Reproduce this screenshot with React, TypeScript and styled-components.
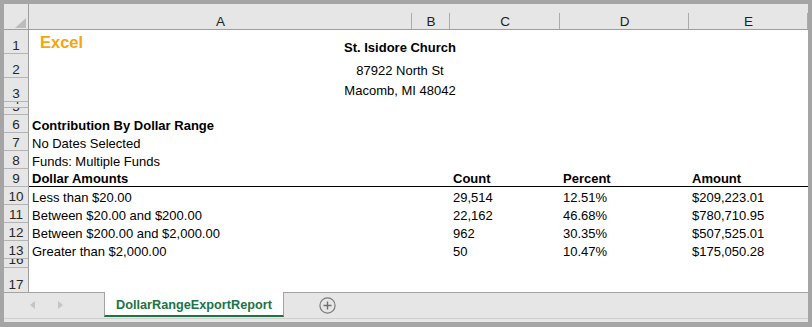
import styled, { createGlobalStyle } from "styled-components";

const GlobalStyle = createGlobalStyle`
  html, body {
    margin: 0;
    padding: 0;
    background: #a5a5a5;
    height: 327px;
    overflow: hidden;
  }
  body {
    font-family: "Liberation Sans", Arial, sans-serif;
  }
`;

const COLS = "25px 383px 38px 110px 129px 119px";
const LETTERS = ["A", "B", "C", "D", "E"];

const data = [
  { label: "Less than $20.00", count: "29,514", pct: "12.51%", amt: "$209,223.01" },
  { label: "Between $20.00 and $200.00", count: "22,162", pct: "46.68%", amt: "$780,710.95" },
  { label: "Between $200.00 and $2,000.00", count: "962", pct: "30.35%", amt: "$507,525.01" },
  { label: "Greater than $2,000.00", count: "50", pct: "10.47%", amt: "$175,050.28" },
];

const App = () => {
  return (
    <>
      <GlobalStyle />
      <Window>
        <Sheet>
          <HeaderRow>
            <Corner>
              <svg width="11" height="10" viewBox="0 0 11 10">
                <polygon points="11,0 11,10 0,10" fill="#bcbcbc" />
              </svg>
            </Corner>
            {LETTERS.map((l) => (
              <ColHeader key={l}>{l}</ColHeader>
            ))}
          </HeaderRow>

          <SheetRow $h={24}>
            <RowHead>1</RowHead>
            <Logo>Excel</Logo>
            <Cell $col="2 / -1" $center $bold $lh={12}>
              St. Isidore Church
            </Cell>
          </SheetRow>
          <SheetRow $h={24}>
            <RowHead>2</RowHead>
            <Cell $col="2 / -1" $center>
              87922 North St
            </Cell>
          </SheetRow>
          <SheetRow $h={24}>
            <RowHead>3</RowHead>
            <Cell $col="2 / -1" $center $pb={4}>
              Macomb, MI 48042
            </Cell>
          </SheetRow>
          <SheetRow $h={6}>
            <RowHead>4</RowHead>
          </SheetRow>
          <SheetRow $h={7}>
            <RowHead>5</RowHead>
          </SheetRow>
          <SheetRow $h={18}>
            <RowHead>6</RowHead>
            <Cell $col="2 / 4" $bold>
              Contribution By Dollar Range
            </Cell>
          </SheetRow>
          <SheetRow $h={18}>
            <RowHead>7</RowHead>
            <Cell $col="2 / 4">No Dates Selected</Cell>
          </SheetRow>
          <SheetRow $h={18}>
            <RowHead>8</RowHead>
            <Cell $col="2 / 4">Funds: Multiple Funds</Cell>
          </SheetRow>
          <SheetRow $h={18}>
            <RowHead>9</RowHead>
            <Cell $col="2 / 4" $bold $rule>
              Dollar Amounts
            </Cell>
            <Cell $col="4" $bold $rule>
              Count
            </Cell>
            <Cell $col="5" $bold $rule>
              Percent
            </Cell>
            <Cell $col="6" $bold $rule>
              Amount
            </Cell>
          </SheetRow>
          {data.map((d, i) => (
            <SheetRow $h={18} key={d.label}>
              <RowHead>{10 + i}</RowHead>
              <Cell $col="2 / 4">{d.label}</Cell>
              <Cell $col="4">{d.count}</Cell>
              <Cell $col="5">{d.pct}</Cell>
              <Cell $col="6">{d.amt}</Cell>
            </SheetRow>
          ))}
          <SheetRow $h={9}>
            <RowHead>16</RowHead>
          </SheetRow>
          <SheetRow $h={24}>
            <RowHead $last>17</RowHead>
          </SheetRow>
        </Sheet>

        <TabBar>
          <TabNav>
            <svg width="5" height="8" viewBox="0 0 5 8">
              <polygon points="5,0 5,8 0,4" fill="#c4c4c4" />
            </svg>
            <svg width="5" height="8" viewBox="0 0 5 8">
              <polygon points="0,0 0,8 5,4" fill="#c4c4c4" />
            </svg>
          </TabNav>
          <Tab>DollarRangeExportReport</Tab>
          <AddSheet>
            <svg width="17" height="17" viewBox="0 0 17 17">
              <circle cx="8.5" cy="8.5" r="7.6" fill="none" stroke="#7b7b7b" strokeWidth="1.2" />
              <path d="M8.5 4.5v8M4.5 8.5h8" stroke="#6f6f6f" strokeWidth="1.4" />
            </svg>
          </AddSheet>
        </TabBar>
      </Window>
    </>
  );
};

const Window = styled.div`
  margin: 4px 4px 0 4px;
  width: 804px;
  height: 318px;
  background: #ffffff;
  display: flex;
  flex-direction: column;
  overflow: hidden;
`;

const Sheet = styled.div`
  display: flex;
  flex-direction: column;
  height: 288px;
  overflow: hidden;
`;

const HeaderRow = styled.div`
  display: grid;
  grid-template-columns: ${COLS};
  height: 26px;
  background: #e6e6e6;
  border-bottom: 1px solid #9e9e9e;
  box-sizing: border-box;
`;

const Corner = styled.div`
  display: flex;
  align-items: flex-end;
  justify-content: flex-end;
  padding: 0 2px 1px 0;
  border-right: 1px solid #9e9e9e;
  box-sizing: border-box;
`;

const ColHeader = styled.div`
  display: flex;
  align-items: flex-end;
  justify-content: center;
  font-size: 13.5px;
  line-height: 14px;
  color: #222;
  background: linear-gradient(#ababab, #ababab) right bottom / 1px 16px no-repeat;
`;

const SheetRow = styled.div<{ $h: number }>`
  display: grid;
  grid-template-columns: ${COLS};
  grid-template-rows: ${(p) => p.$h}px;
  height: ${(p) => p.$h}px;
  flex-shrink: 0;
`;

const RowHead = styled.div<{ $last?: boolean }>`
  grid-row: 1;
  grid-column: 1;
  display: flex;
  align-items: flex-end;
  justify-content: center;
  overflow: hidden;
  background: #e6e6e6;
  border-right: 1px solid #9e9e9e;
  border-bottom: ${(p) => (p.$last ? "none" : "1px solid #b4b4b4")};
  box-sizing: border-box;
  font-size: 13.5px;
  line-height: 14px;
  color: #262626;
`;

const Cell = styled.div<{
  $col: string;
  $bold?: boolean;
  $center?: boolean;
  $rule?: boolean;
  $lh?: number;
  $pb?: number;
}>`
  grid-row: 1;
  grid-column: ${(p) => p.$col};
  display: flex;
  align-items: flex-end;
  justify-content: ${(p) => (p.$center ? "center" : "flex-start")};
  padding: 0 ${(p) => (p.$center ? "40px" : "3px")} ${(p) => p.$pb ?? 0}px 3px;
  font-size: 13px;
  line-height: ${(p) => p.$lh ?? 14}px;
  font-weight: ${(p) => (p.$bold ? 700 : 400)};
  color: #000;
  white-space: nowrap;
  border-bottom: ${(p) => (p.$rule ? "1px solid #000" : "none")};
  box-sizing: border-box;
`;

const Logo = styled.div`
  grid-row: 1;
  grid-column: 2;
  padding: 3px 0 0 11px;
  font-size: 16.5px;
  line-height: 18px;
  font-weight: 700;
  color: #f7a50a;
`;

const TabBar = styled.div`
  display: flex;
  height: 30px;
  background: #e6e6e6;
  border-top: 1px solid #a3a3a3;
  box-shadow: inset 0 -3px 0 #e6e6e6, inset 0 -4px 0 #cfcfcf;
  box-sizing: border-box;
`;

const TabNav = styled.div`
  display: flex;
  align-items: center;
  gap: 23px;
  width: 100px;
  padding: 0 0 5px 26px;
  box-sizing: border-box;
`;

const Tab = styled.div`
  display: flex;
  align-items: center;
  justify-content: center;
  width: 180px;
  height: 25px;
  margin-top: -1px;
  background: #ffffff;
  border-left: 1px solid #a3a3a3;
  border-right: 1px solid #a3a3a3;
  border-bottom: 2px solid #217346;
  box-sizing: border-box;
  padding-top: 3px;
  font-size: 12.7px;
  font-weight: 700;
  color: #217346;
`;

const AddSheet = styled.div`
  display: flex;
  align-items: center;
  padding: 0 0 4px 35px;
`;

export default App;
